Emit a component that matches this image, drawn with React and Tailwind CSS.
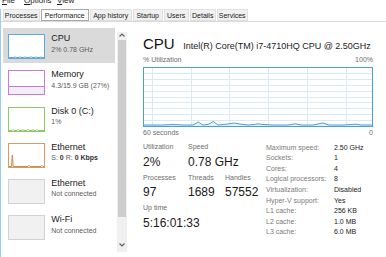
import React from 'react';

const FONT = "font-['Liberation_Sans',Arial,sans-serif]";

function Thumb({ kind }) {
  if (kind === 'cpu')
    return (
      <svg width="37" height="25" viewBox="0 0 37 25">
        <rect x="0.5" y="0.5" width="36" height="24" fill="#fff" stroke="#5eaae0" />
        <polyline
          points="1,23.5 6,23.5 7,22.8 8,23.5 11,23.5 12,22.6 13,23.5 16,23.5 17,22.8 18,23.5 22,23.5 23,22.6 24,23.5 27,23.5 28,22.8 29,23.5 32,23.5 33,22.9 34,23.5 36,23.5"
          fill="none"
          stroke="#5eaae0"
        />
      </svg>
    );
  if (kind === 'mem')
    return (
      <svg width="37" height="25" viewBox="0 0 37 25">
        <rect x="0.5" y="0.5" width="36" height="24" fill="#fff" stroke="#c77ad8" />
        <rect x="1" y="17" width="35" height="7" fill="#f3edf5" />
        <line x1="1" y1="16.5" x2="36" y2="16.5" stroke="#c77ad8" />
      </svg>
    );
  if (kind === 'disk')
    return (
      <svg width="37" height="25" viewBox="0 0 37 25">
        <rect x="0.5" y="0.5" width="36" height="24" fill="#fff" stroke="#8ccb62" />
        <polyline
          points="1,23.5 4,23.5 5,22.5 6,23.5 9,23.5 10,22.2 11,23.5 14,23.5 15,22.7 16,23.5 19,23.5 20,22.3 21,23.5 24,23.5 25,22.6 26,23.5 28,23.5 29,22.4 30,23.5 36,23.5"
          fill="none"
          stroke="#8ccb62"
        />
      </svg>
    );
  if (kind === 'eth')
    return (
      <svg width="37" height="25" viewBox="0 0 37 25">
        <rect x="0.5" y="0.5" width="36" height="24" fill="#fff" stroke="#d89a62" />
        <polyline
          points="1,23.5 3.5,23.5 4.3,12 5.2,23.5 20,23.5 21,22.3 22,23.5 33,23.5 34,22.5 35,23.5 36,23.5"
          fill="#f7ece2"
          stroke="#d08a4e"
        />
      </svg>
    );
  return (
    <svg width="37" height="25" viewBox="0 0 37 25">
      <rect x="0.5" y="0.5" width="36" height="24" fill="#f1f1f1" stroke="#d2d2d2" />
    </svg>
  );
}

const items = [
  { t: 'CPU', s: '2% 0.78 GHz', k: 'cpu', sel: true },
  { t: 'Memory', s: '4.3/15.9 GB (27%)', k: 'mem' },
  { t: 'Disk 0 (C:)', s: '1%', k: 'disk' },
  {
    t: 'Ethernet',
    s: (
      <>
        S: <span className="font-bold text-[#333]">0</span> R:{' '}
        <span className="font-bold text-[#333]">0 Kbps</span>
      </>
    ),
    k: 'eth',
  },
  { t: 'Ethernet', s: 'Not connected', k: 'off' },
  { t: 'Wi-Fi', s: 'Not connected', k: 'off' },
];

const tabs = [
  { n: 'Processes', w: 'w-[37px]' },
  { n: 'Performance', w: 'w-[48px]', sel: true },
  { n: 'App history', w: 'w-[42px]' },
  { n: 'Startup', w: 'w-[30px]' },
  { n: 'Users', w: 'w-[25px]' },
  { n: 'Details', w: 'w-[26px]' },
  { n: 'Services', w: 'w-[31px]' },
];

function Graph() {
  const vx = [9, 48, 86, 125, 164, 203];
  const hy = [];
  for (let i = 1; i < 10; i++) hy.push(Math.round((59 * i) / 10) + 0.5);
  const pts =
    '1,58 20,58 30,57.5 40,58 50,58 55.3,55 60,58 65,57.5 70.3,54.5 75,58 85,57 91,56 97,57 105,58 111,57.5 115,56.8 120,57.5 130,58 145,58 152,56.8 158,58 170,58 179.7,56 186,58 200,58 213,57.2 218,58 229,58';
  return (
    <svg width="230" height="60" viewBox="0 0 230 60">
      <rect x="0" y="0" width="230" height="60" fill="#fff" />
      {vx.map((x) => (
        <line key={'v' + x} x1={x + 0.5} y1="1" x2={x + 0.5} y2="59" stroke="#d9eaf6" />
      ))}
      {hy.map((y) => (
        <line key={'h' + y} x1="1" y1={y} x2="229" y2={y} stroke="#d9eaf6" />
      ))}
      <polygon points={pts + ' 229,59 1,59'} fill="#e8f2fa" />
      <polyline points={pts} fill="none" stroke="#4a9fd9" strokeWidth="1" />
      <rect x="0.5" y="0.5" width="229" height="59" fill="none" stroke="#4a9fd9" />
    </svg>
  );
}

function Chevron({ up }) {
  return (
    <svg width="6" height="4" viewBox="0 0 6 4">
      <polyline
        points={up ? '0.5,3.5 3,1 5.5,3.5' : '0.5,0.5 3,3 5.5,0.5'}
        fill="none"
        stroke="#606060"
        strokeWidth="1.2"
      />
    </svg>
  );
}

const rightRows = [
  ['Maximum speed:', '2.50 GHz'],
  ['Sockets:', '1'],
  ['Cores:', '4'],
  ['Logical processors:', '8'],
  ['Virtualization:', 'Disabled'],
  ['Hyper-V support:', 'Yes'],
  ['L1 cache:', '256 KB'],
  ['L2 cache:', '1.0 MB'],
  ['L3 cache:', '6.0 MB'],
];

export default function App() {
  return (
    <div className={`w-[386px] h-[257px] overflow-hidden bg-white text-[#1a1a1a] ${FONT}`}>
      {/* menu bar (cut at top) */}
      <div className="h-[8px] overflow-hidden">
        <div className="-mt-[4px] flex text-[8px] leading-[10px] text-[#1a1a1a]">
          <span className="ml-[2px] w-[22px]">
            <span className="underline">F</span>ile
          </span>
          <span className="w-[33px]">
            <span className="underline">O</span>ptions
          </span>
          <span>
            <span className="underline">V</span>iew
          </span>
        </div>
      </div>

      <div className="mt-[1px] border-l border-[#9ccbee] h-[248px] flex flex-col">
        {/* tabs */}
        <div className="h-[13px] border-b border-[#d9d9d9] flex gap-[1px] pl-[1.7px]">
          {tabs.map((t) => (
            <div
              key={t.n}
              className={`${t.w} h-[12px] border flex items-center justify-center text-[7px] leading-[9px] ${
                t.sel ? 'bg-white border-[#a8a8a8]' : 'bg-[#f0f0f0] border-[#e0e0e0]'
              }`}
            >
              {t.n}
            </div>
          ))}
        </div>

        <div className="flex flex-1">
          {/* left panel */}
          <div className="w-[126px] flex">
            <div className="w-[116px] pt-[6.3px]">
              {items.map((it, i) => (
                <div key={i} className="h-[36.15px]">
                  <div
                    className={`ml-[2.3px] w-[112px] h-[35px] flex ${it.sel ? 'bg-[#dadada]' : ''}`}
                  >
                    <div className="ml-[5px] mt-[6px]">
                      <Thumb kind={it.k} />
                    </div>
                    <div className="ml-[6px] pt-[5px]">
                      <div className="text-[9px] leading-[11px] text-[#1a1a1a]">{it.t}</div>
                      <div className="text-[7px] leading-[9px] mt-[0.5px] text-[#5c5c5c] whitespace-nowrap">
                        {it.s}
                      </div>
                    </div>
                  </div>
                </div>
              ))}
            </div>
            {/* scrollbar */}
            <div className="w-[10px] mt-[9.7px] h-[220px] bg-[#f0f0f0] flex flex-col items-center">
              <div className="h-[8px] pt-[1px] flex justify-center">
                <Chevron up />
              </div>
              <div className="w-[8px] h-[177px] bg-[#cdcdcd]" />
              <div className="flex-1 flex items-end justify-center pb-[5px]">
                <Chevron />
              </div>
            </div>
          </div>

          {/* right panel */}
          <div className="ml-[16px] w-[230px] flex flex-col">
            <div className="mt-[12.8px] h-[18px] flex items-baseline whitespace-nowrap">
              <span className="text-[15px] leading-[18px] text-[#111]">CPU</span>
              <span className="ml-[8.5px] text-[9px] leading-[11px] text-[#1a1a1a]">
                Intel(R) Core(TM) i7-4710HQ CPU @ 2.50GHz
              </span>
            </div>
            <div className="mt-[2.2px] flex justify-between text-[7px] leading-[9px] text-[#6d6d6d]">
              <span>% Utilization</span>
              <span>100%</span>
            </div>
            <div className="mt-[3px] h-[60px]">
              <Graph />
            </div>
            <div className="mt-[1px] flex justify-between text-[7px] leading-[9px] text-[#6d6d6d]">
              <span>60 seconds</span>
              <span>0</span>
            </div>

            <div className="mt-[5px] flex">
              {/* left stats */}
              <div className="w-[123px] flex flex-col">
                <div className="flex text-[7px] leading-[9px] text-[#6d6d6d]">
                  <span className="w-[45px]">Utilization</span>
                  <span>Speed</span>
                </div>
                <div className="mt-[4.3px] flex text-[12px] leading-[14px] text-[#1a1a1a] whitespace-nowrap">
                  <span className="w-[45px]">2%</span>
                  <span>0.78 GHz</span>
                </div>
                <div className="mt-[3.7px] flex text-[7px] leading-[9px] text-[#6d6d6d]">
                  <span className="w-[45px]">Processes</span>
                  <span className="w-[37px]">Threads</span>
                  <span>Handles</span>
                </div>
                <div className="mt-[3.5px] flex text-[12px] leading-[14px] text-[#1a1a1a]">
                  <span className="w-[45px]">97</span>
                  <span className="w-[37px]">1689</span>
                  <span>57552</span>
                </div>
                <div className="mt-[3.5px] text-[7px] leading-[9px] text-[#6d6d6d]">Up time</div>
                <div className="mt-[4px] text-[12px] leading-[14px] text-[#1a1a1a]">5:16:01:33</div>
              </div>
              {/* right stats */}
              <div className="mt-[0.7px] flex flex-col">
                {rightRows.map(([l, v]) => (
                  <div key={l} className="flex h-[10.6px] text-[7px] leading-[10.6px] whitespace-nowrap">
                    <span className="w-[68px] text-[#7a7a7a]">{l}</span>
                    <span className="text-[#1a1a1a]">{v}</span>
                  </div>
                ))}
              </div>
            </div>
          </div>
        </div>
      </div>
    </div>
  );
}
